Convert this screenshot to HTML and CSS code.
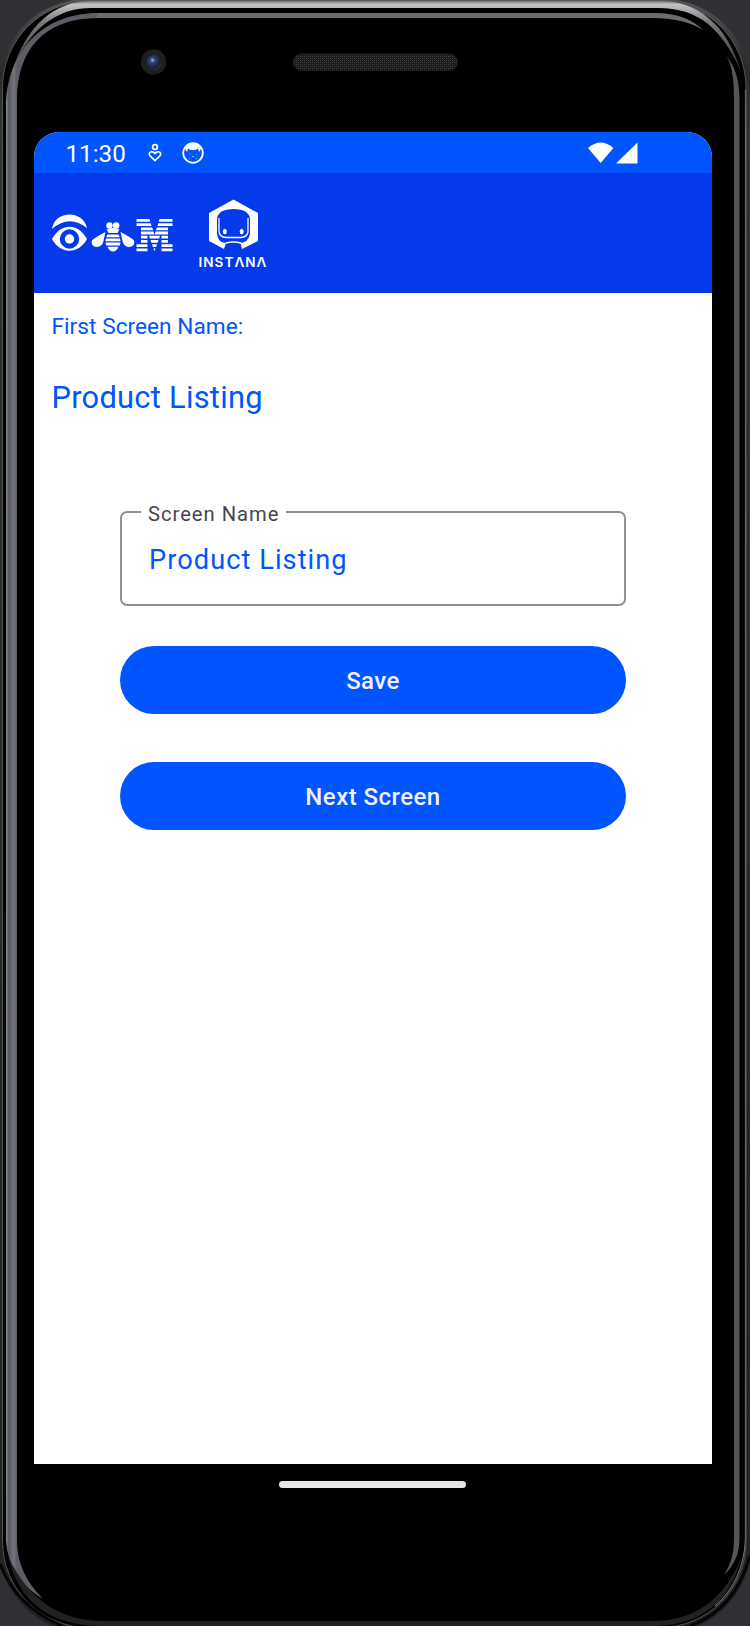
FILE: index.html
```html
<!DOCTYPE html>
<html lang="en">
<head>
<meta charset="utf-8">
<title>First Screen</title>
<link rel="stylesheet" href="styles.css">
</head>
<body>
<div class="device">
  <svg class="shell" viewBox="0 0 750 1626" aria-hidden="true">
    <defs>
      <linearGradient id="rim" x1="0" y1="0" x2="0" y2="1">
        <stop offset="0" stop-color="#555"/><stop offset=".04" stop-color="#2b2b2b"/><stop offset=".08" stop-color="#333"/><stop offset="1" stop-color="#202020"/>
      </linearGradient>
      <linearGradient id="topRim" x1="0" y1="0" x2="0" y2="1">
        <stop offset="0" stop-color="#777"/><stop offset=".05" stop-color="#c4c4c6"/><stop offset=".3" stop-color="#77797c"/><stop offset="1" stop-color="#333"/>
      </linearGradient>
      <linearGradient id="leftRim" x1="6" y1="0" x2="17" y2="0" gradientUnits="userSpaceOnUse">
        <stop offset="0" stop-color="#8b8c8e"/><stop offset=".25" stop-color="#55585d"/><stop offset=".7" stop-color="#72757c"/><stop offset="1" stop-color="#5c5e65"/>
      </linearGradient>
      <radialGradient id="lens" cx=".4" cy=".35" r=".65">
        <stop offset="0" stop-color="#a9bce8"/><stop offset=".25" stop-color="#334578"/><stop offset=".8" stop-color="#141d3c"/><stop offset="1" stop-color="#34363c"/>
      </radialGradient>
      <pattern id="mesh" width="4" height="4" patternUnits="userSpaceOnUse">
        <rect width="4" height="4" fill="#1c1d1d"/><path d="M0 0h1v1H0zM2 2h1v1H2z" fill="#454747"/><path d="M2 0h1v1H2zM0 2h1v1H0z" fill="#303232"/>
      </pattern>
    </defs>
    <rect x="-1" y="-1" width="752" height="1634" rx="88" fill="url(#rim)"/>
    <rect x="2.500" y="1.500" width="743.500" height="1626" rx="86" fill="#000" stroke="#555"/>
    <path d="M12 72C26 26 54 1 91 1H660C696 1 727 23 741 72C722 28 698 8 658 8H91C56 8 28 30 12 72Z" fill="url(#topRim)"/>
    <path d="M745.500 90V1540Q743 1582 715 1606" fill="none" stroke="#6a6a6a" stroke-width="1.200"/>
    <path d="M98 13C44 13 6 50 6 108V1541Q9 1579 43 1599Q17 1573 17 1541V100C17 51 43 18 98 18Z" fill="url(#leftRim)"/>
    <path d="M97 13H658Q687 14 703 30Q684 18 652 18H97Z" fill="#6b6c72"/>
    <path d="M725 55Q739 69 739.500 98V1540Q739 1561 724 1575Q734 1560 734 1540V99Q734 65 725 55Z" fill="#55555a"/>
    <path d="M8 1556Q24 1626 103 1626H652Q724 1626 742 1556Q716 1621 652 1621H103Q38 1621 8 1556Z" fill="#222"/>
    <path d="M0 1564Q16 1606 62 1626M750 1556Q735 1610 690 1626" fill="none" stroke="#050505" stroke-width="3"/>
    <circle cx="153.500" cy="62" r="12.700" fill="#1e1f20"/>
    <circle cx="154" cy="62.500" r="7.500" fill="url(#lens)"/>
    <rect x="293" y="54" width="164.500" height="16.500" rx="8.200" fill="url(#mesh)" stroke="#191a1a"/>
  </svg>

  <main class="screen">
    <div class="statusbar">
      <span class="clock">11:30</span>
      <svg class="ico-heart" viewBox="0 0 14 20"><circle cx="7" cy="4" r="2.400"/><path d="M7 17.600L2.200 13C-.4 10 3.500 6.500 7 10.400C10.500 6.500 14.400 10 11.800 13Z"/></svg>
      <svg class="ico-cat" viewBox="0 0 22 22"><circle cx="11" cy="11" r="9.800" fill="none" stroke="#fff" stroke-width="1.800"/><path d="M2.500 6Q11-3 19.500 6L17 10L16 6.500L13.500 8H8.500L6 6.500L5 10Z" fill="#fff"/><path d="M7 12h1M14 12h1M10 14.500h2M7 17l1-.5M15 17l-1-.5" stroke="#80aaff" fill="none"/></svg>
      <svg class="ico-signal" viewBox="0 0 50 22"><path d="M0 6Q12.700-5 25.400 6L12.700 21Z"/><path d="M49.500 .5V21.500H28Z"/></svg>
    </div>
    <header class="appbar">
      <svg class="logos" viewBox="0 0 230 90" fill="#fff">
        <path d="M0 22C3 3 31 3 35 21Q17 7 0 22Z"/>
        <path fill-rule="evenodd" d="M0 32C9 15.500 26 15.500 35 32C27 47.500 8 47.500 0 32ZM7.800 32A9.700 9.700 0 1 0 27.200 32A9.700 9.700 0 1 0 7.800 32Z"/>
        <circle cx="17.500" cy="32" r="4.700"/>
        <circle cx="57.500" cy="18.500" r="3.200"/><circle cx="64.200" cy="18.500" r="3.200"/>
        <path d="M54.500 22.500Q61 19.500 67.500 22.500L65.500 26H56.500Z"/>
        <path d="M53.500 25L51 36C48 42 38 41 40 33.500Q42 31 53.500 25ZM68.500 25L71 36C74 42 84 41 82 33.500Q80 31 68.500 25Z"/>
        <path d="M55.500 27.400h11l1.300 2.800H54.200ZM54 31.500h14l.5 2.800h-15ZM53.500 35.600h15l-.7 2.800H54.200ZM55.500 39.700h11Q64.500 44.500 61 44.500Q57.500 44.500 55.500 39.700Z"/>
        <path d="M84.500 12h13l.8 2.800H84.500zM107.500 12h13v2.800h-13.800zM84.500 16.200h14.200l.9 2.800H84.500zM106.300 16.200h14.200V19h-15.100zM89 20.400h11.100l1 2.800H89zM104.900 20.400H116v2.800h-12.100zM89 24.600h12.500l.8 2.800H89zM103.500 24.600H116v2.800h-13.300zM89 28.800h6.500v2.800H89zM97 28.800h11l-.9 2.800h-9.200zM109.500 28.800h6.500v2.800h-6.500zM89 33h6.500v2.800H89zM98.500 33h8l-.9 2.800h-6.200zM109.500 33h6.500v2.800h-6.500zM84.500 37.200h11V40h-11zM100 37.200h5l-.9 2.800h-3.200zM109.500 37.200h11V40h-11zM84.500 41.400h11v2.800h-11zM101.400 41.400h2.200l-1.100 2.800zM109.500 41.400h11v2.800h-11z"/>
        <path fill-rule="evenodd" d="M181.500-7.500L206 6V34L190 42L188.500 36Q196 35.500 198 27V12Q197 2 181.500 2Q166 2 165 12V27Q166 35.500 174 36L172 42L157 34V6Z"/>
        <path d="M167 11V25Q168 30 174 30.500H189Q195 30 196 25V11M174 36Q181.500 34 189 36" fill="none" stroke="#fff" stroke-width="1.300"/>
        <ellipse cx="172.800" cy="24.500" rx="2" ry="2.700"/><ellipse cx="189.700" cy="24.500" rx="2" ry="2.700"/>
        <text class="brand" x="146.500" y="60" textLength="69" lengthAdjust="spacingAndGlyphs">INSTΛNΛ</text>
      </svg>
    </header>
    <section class="content">
      <p class="caption">First Screen Name:</p>
      <h1 class="name">Product Listing</h1>
      <div class="form">
        <fieldset class="field">
          <legend>Screen Name</legend>
          <span class="value">Product Listing</span>
        </fieldset>
        <button class="btn" type="button">Save</button>
        <button class="btn" type="button">Next Screen</button>
      </div>
    </section>
  </main>
  <div class="navbar"><span class="handle"></span></div>
</div>
</body>
</html>
```
FILE: styles.css
```css
* { box-sizing: border-box; }
body { margin: 0; background: #2f3033; font-family: Roboto, sans-serif; }
.device {
  position: relative;
  width: 750px;
  height: 1626px;
  padding: 132px 38px 0 34px;
  overflow: hidden;
}
.shell { position: absolute; inset: 0; width: 750px; height: 1626px; }
.screen {
  position: relative;
  height: 1332px;
  background: #fff;
  border-radius: 25px 25px 0 0;
  overflow: hidden;
}
.statusbar {
  display: flex;
  height: 41px;
  padding: 0 74px 0 31.5px;
  background: #0055ff;
  color: #fff;
}
.clock { width: 60px; font-size: 24.2px; line-height: 44px; white-space: nowrap; }
.ico-heart { width: 14px; height: 20px; margin: 11px 0 0 22px; fill: none; stroke: #fff; stroke-width: 1.7; }
.ico-cat { width: 22px; height: 22px; margin: 10px 0 0 20.5px; }
.ico-signal { width: 50px; height: 22px; margin: 9.5px 0 0 auto; fill: #fff; }
.appbar { height: 119.5px; padding: 34px 18px 0; background: #053aeb; }
.logos { display: block; width: 230px; height: 90px; overflow: visible; }
.brand { font: 600 13px Inter, sans-serif; letter-spacing: 1px; }
.content { padding: 20.5px 17.5px; color: #0055ff; }
.caption { margin: 0; font-size: 22.6px; line-height: 28px; letter-spacing: .06px; }
.name { margin: 38px 0 0; font-size: 30.8px; font-weight: 400; line-height: 38px; letter-spacing: .28px; }
.form { display: flex; flex-direction: column; width: 506px; margin: 81px 0 0 68.5px; }
.field {
  height: 108px;
  margin: 0;
  padding: 0 26px;
  border: 2px solid #919191;
  border-radius: 7px;
}
.field legend {
  margin-left: -7px;
  padding: 4px 7px 0;
  color: #49454f;
  font-size: 20.2px;
  line-height: 24px;
  letter-spacing: .98px;
}
.value { display: block; margin: 16px 0 0 1px; font-size: 27.2px; line-height: 36px; letter-spacing: 1.05px; }
.btn {
  height: 68px;
  margin: 40px 0 0;
  padding: 2px 0 0;
  border: 0;
  border-radius: 34px;
  background: #0055ff;
  color: #f3f0fa;
  font: 500 24px Roboto, sans-serif;
  letter-spacing: .45px;
}
.btn + .btn { margin-top: 48px; }
.navbar { position: relative; display: flex; justify-content: center; padding: 17px 1px 0 0; }
.handle { width: 187px; height: 7px; border-radius: 4px; background: #e6e6e6; }
```
